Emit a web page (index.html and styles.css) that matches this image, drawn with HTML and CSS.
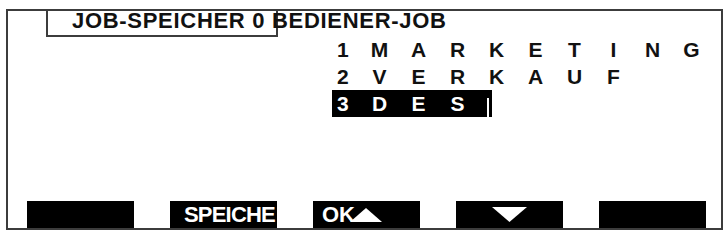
FILE: index.html
```html
<!DOCTYPE html>
<html lang="de">
<head>
    <meta charset="UTF-8">
    <meta name="viewport" content="width=device-width, initial-scale=1.0">
    <title>Job-Speicher</title>
    <link rel="stylesheet" href="styles.css">
</head>
<body>

<div class="lcd">
    <div class="title">JOB-SPEICHER 0 BEDIENER-JOB</div>

    <div class="menu">
        <div class="row">
            <span class="num">1</span><span class="ch">M</span><span class="ch">A</span><span class="ch">R</span><span class="ch">K</span><span class="ch">E</span><span class="ch">T</span><span class="ch">I</span><span class="ch">N</span><span class="ch">G</span>
        </div>
        <div class="row">
            <span class="num">2</span><span class="ch">V</span><span class="ch">E</span><span class="ch">R</span><span class="ch">K</span><span class="ch">A</span><span class="ch">U</span><span class="ch">F</span>
        </div>
        <div class="row selected">
            <span class="num">3</span><span class="ch">D</span><span class="ch">E</span><span class="ch">S</span><span class="cursor"></span>
        </div>
    </div>

    <div class="softkeys">
        <div class="key"></div>
        <div class="key key-save">SPEICHE</div>
        <div class="key key-ok">OK<svg class="arrow-up" width="32" height="14" viewBox="0 0 32 14"><polygon points="16,0 32,14 0,14" fill="#fff"/></svg></div>
        <div class="key key-down"><svg width="35" height="15" viewBox="0 0 35 15"><polygon points="0,0 35,0 17.5,15" fill="#fff"/></svg></div>
        <div class="key"></div>
    </div>
</div>

</body>
</html>
```

FILE: styles.css
```css
body {
    margin: 0;
    background: #fff;
    font-family: 'Liberation Sans', Arial, sans-serif;
    font-weight: bold;
    color: #111;
}
.lcd {
    box-sizing: border-box;
    display: flex;
    flex-direction: column;
    width: 717px;
    height: 221px;
    margin: 9px 0 0 6px;
    border: 2px solid #3c3c3c;
}
.title {
    box-sizing: border-box;
    width: 232px;
    height: 26px;
    margin-left: 38px;
    padding-left: 24px;
    border: 2px solid #3c3c3c;
    border-top: none;
    font-size: 22px;
    line-height: 20px;
    letter-spacing: 0.7px;
    white-space: nowrap;
}
.menu {
    margin: -1px 0 0 324px;
}
.row {
    display: flex;
    width: fit-content;
    height: 27px;
    font-size: 21px;
    line-height: 27px;
}
.num {
    box-sizing: border-box;
    width: 28px;
    padding-left: 5px;
}
.ch {
    width: 39px;
    text-align: center;
}
.selected {
    background: #000;
    color: #fff;
}
.cursor {
    position: relative;
    width: 15px;
}
.cursor::after {
    content: '';
    position: absolute;
    left: 10px;
    top: 8px;
    bottom: 0;
    width: 2px;
    background: #fff;
}
.softkeys {
    display: flex;
    gap: 36px;
    margin-top: auto;
    padding-left: 19px;
}
.key {
    box-sizing: border-box;
    width: 107px;
    height: 27px;
    background: #000;
    color: #fff;
    font-size: 22px;
    line-height: 27px;
    white-space: nowrap;
}
.key-save {
    padding-left: 14px;
    letter-spacing: -0.8px;
}
.key-ok {
    padding-left: 9px;
}
.arrow-up {
    vertical-align: baseline;
    margin-left: -5px;
}
.key-down {
    display: flex;
    justify-content: center;
    padding-top: 6px;
}
```
